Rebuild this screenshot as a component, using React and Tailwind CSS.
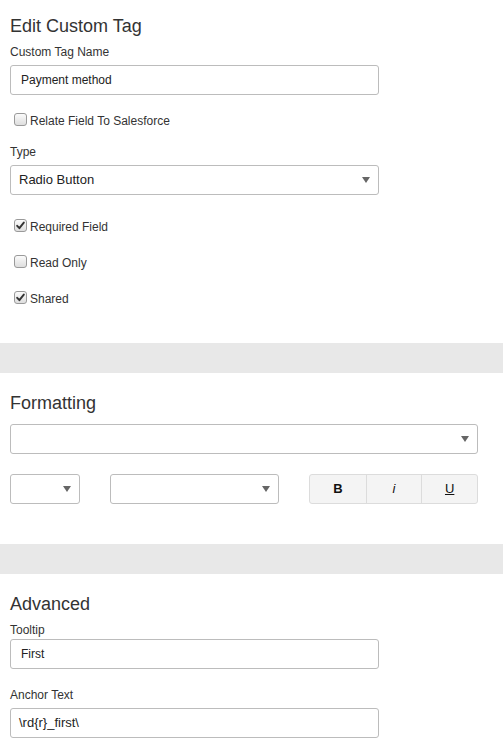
import React from 'react';

const font = { fontFamily: '"Liberation Sans", Arial, Helvetica, sans-serif' };

const Caret = () => (
  <svg width="8" height="6" viewBox="0 0 8 6" className="shrink-0">
    <path d="M0 0 L8 0 L4 6 Z" fill="#666" />
  </svg>
);

const Checkbox = ({ checked }) => (
  <span className="mt-0 w-[13px] h-[13px] shrink-0 rounded-[3px] border border-[#9a9a9a] bg-gradient-to-b from-[#fbfbfb] to-[#dedede] flex items-center justify-center">
    {checked && (
      <svg width="9" height="9" viewBox="0 0 9 9">
        <path d="M1.2 4.8 L3.4 7.2 L7.8 1.6" fill="none" stroke="#333" strokeWidth="1.9" strokeLinecap="round" strokeLinejoin="round" />
      </svg>
    )}
  </span>
);

const CheckRow = ({ label, checked, className = '' }) => (
  <label className={`flex items-start h-[17px] pl-[4px] ${className}`}>
    <Checkbox checked={checked} />
    <span className="ml-[3px] text-[12px] leading-[17px] text-[#333]">{label}</span>
  </label>
);

const Select = ({ value, className = '', textClass = 'text-[13px]' }) => (
  <div className={`h-[30px] border border-[#bcbcbc] rounded-[3px] bg-white flex items-center justify-between pl-[8px] pr-[8px] ${className}`}>
    <span className={`${textClass} text-[#222]`}>{value}</span>
    <Caret />
  </div>
);

const Input = ({ value, className = '', textClass = 'text-[12px] pl-[10px]' }) => (
  <div className={`h-[30px] border border-[#bcbcbc] rounded-[3px] bg-white flex items-center ${textClass} text-[#222] ${className}`}>
    {value}
  </div>
);

const Heading = ({ children }) => (
  <h2 className="text-[18px] leading-[20px] text-[#333]">{children}</h2>
);

const Label = ({ children, className = '' }) => (
  <div className={`text-[12px] leading-[17px] text-[#333] ${className}`}>{children}</div>
);

const Band = () => <div className="h-[30px] bg-[#e8e8e8]" />;

export default function App() {
  return (
    <div className="w-[503px] min-h-[755px] bg-white" style={font}>
      {/* Edit custom tag */}
      <section className="flex flex-col px-[10px] pt-[16px] pb-[35px]">
        <Heading>Edit Custom Tag</Heading>
        <Label className="mt-[8px]">Custom Tag Name</Label>
        <Input value="Payment method" className="mt-[4px] w-[369px]" />
        <CheckRow label="Relate Field To Salesforce" className="mt-[18px]" />
        <Label className="mt-[14px]">Type</Label>
        <Select value="Radio Button" className="mt-[4px] w-[369px]" />
        <CheckRow label="Required Field" checked className="mt-[24px]" />
        <CheckRow label="Read Only" className="mt-[19px]" />
        <CheckRow label="Shared" checked className="mt-[19px]" />
      </section>

      <Band />

      {/* Formatting */}
      <section className="flex flex-col px-[10px] pt-[20px] pb-[40px]">
        <Heading>Formatting</Heading>
        <Select value="" className="mt-[11px] w-[468px]" />
        <div className="flex mt-[20px]">
          <Select value="" className="w-[70px]" />
          <Select value="" className="w-[169px] ml-[30px]" />
          <div className="w-[169px] ml-[30px] h-[30px] grid grid-cols-3 border border-[#dcdcdc] rounded-[3px] bg-[#f4f4f4] text-[13px] text-[#111]">
            <div className="flex items-center justify-center font-bold">B</div>
            <div className="flex items-center justify-center italic border-l border-[#dcdcdc]">i</div>
            <div className="flex items-center justify-center underline border-l border-[#dcdcdc]">U</div>
          </div>
        </div>
      </section>

      <Band />

      {/* Advanced */}
      <section className="flex flex-col px-[10px] pt-[20px] pb-[20px]">
        <Heading>Advanced</Heading>
        <Label className="mt-[8px]">Tooltip</Label>
        <Input value="First" className="w-[369px]" />
        <Label className="mt-[18px]">Anchor Text</Label>
        <Input value="\rd{r}_first\" textClass="text-[13px] pl-[8px]" className="mt-[4px] w-[369px]" />
      </section>
    </div>
  );
}
